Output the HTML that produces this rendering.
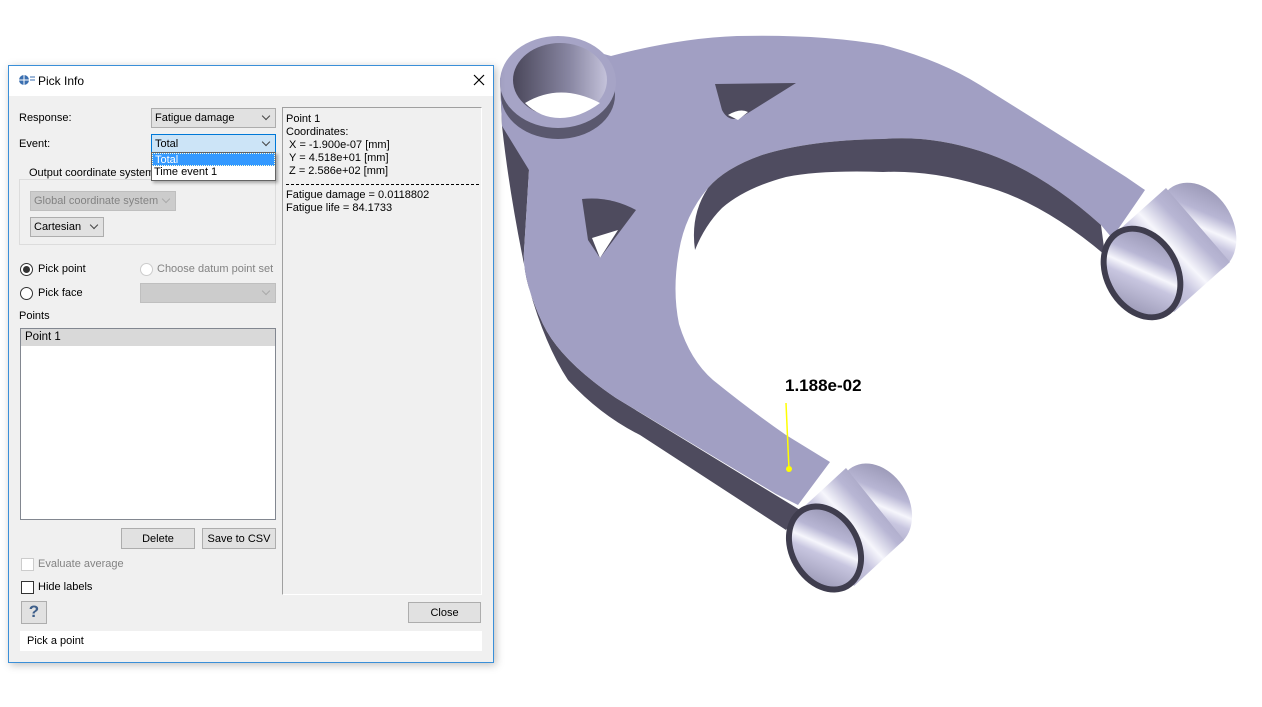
<!DOCTYPE html>
<html><head><meta charset="utf-8">
<style>
*{margin:0;padding:0;box-sizing:border-box}
body{width:1262px;height:707px;background:#fff;position:relative;overflow:hidden;font-family:"Liberation Sans",sans-serif;font-size:11px;color:#000}
.a{position:absolute}
.dlg{left:8px;top:65px;width:486px;height:598px;background:#f0f0f0;border:1px solid #3a8fd8;box-shadow:2px 2px 8px rgba(0,0,0,.25)}
.title{left:0;top:0;width:484px;height:30px;background:#fff}
.combo{height:20px;border:1px solid #adadad;background:#e1e1e1;padding:3px 0 0 3px;font-size:11px}
.chev{position:absolute;right:6px;top:4px;width:6px;height:6px;border-right:1px solid #444;border-bottom:1px solid #444;transform:rotate(45deg);}
.btn{height:21px;border:1px solid #adadad;background:#e1e1e1;text-align:center;padding-top:4px}
.radio{width:13px;height:13px;border:1px solid #333;border-radius:50%;background:#fff}
.chk{width:13px;height:13px;border:1px solid #333;background:#fff}
</style></head><body>

<svg class="a" style="left:0;top:0" width="1262" height="707">
<defs>
<linearGradient id="cyl" x1="0" y1="1" x2="1" y2="0">
<stop offset="0" stop-color="#8c8aa8"/><stop offset=".42" stop-color="#c8c6e0"/><stop offset=".52" stop-color="#f6f6fc"/><stop offset=".65" stop-color="#b8b6d4"/><stop offset="1" stop-color="#8a88a6"/></linearGradient>
<linearGradient id="hole" x1="0" y1="0" x2="1" y2="0"><stop offset="0" stop-color="#4a475a"/><stop offset=".6" stop-color="#8886a2"/><stop offset="1" stop-color="#c4c2da"/></linearGradient>
</defs>
<path d="M500,78 L502,126 Q510,200 529,288 Q545,345 568,380 Q600,415 640,435 L786,530 L800,510 L616,398 Q560,360 543,324 Q522,280 524,251 L529,170 Z" fill="#4e4b5e"/>
<path d="M500,78 Q560,40 611,56 Q680,38 737,36 Q820,34 883,45 Q940,60 980,85 Q1060,135 1126,177 L1145,190 L1112,238 L1101,225 Q1040,170 980,151 Q930,135 883,139 Q810,140 762,155 Q725,168 708,188 Q685,215 679,251 Q672,290 679,324 Q690,360 713,380 Q750,410 786,435 L830,462 L798,505 L776,494 L616,398 Q560,360 543,324 Q522,280 524,251 L529,170 L502,126 Z" fill="#a19fc3"/>
<path d="M708,188 Q725,168 762,155 Q810,140 883,139 Q930,135 980,151 Q1040,170 1101,225 L1105,255 Q1040,200 980,185 Q930,170 883,172 Q820,170 786,177 Q745,188 722,208 Q705,225 695,250 Q690,215 708,188 Z" fill="#4f4c60"/>
<ellipse cx="558" cy="95" rx="57" ry="44" fill="#5a586e"/>
<ellipse cx="558" cy="82" rx="58" ry="46" fill="#a6a4c6"/>
<ellipse cx="560" cy="80" rx="47" ry="37" fill="url(#hole)"/>
<path d="M525,103 Q560,82 600,103 Q580,118 560,118 Q540,118 525,103Z" fill="#fff"/>
<path d="M715,84 L796,83 L740,118 Q728,122 722,110 Z" fill="#4e4b5e"/>
<path d="M728,115 Q740,108 748,112 L738,120 Z" fill="#fff"/>
<path d="M582,199 Q610,196 636,210 L600,258 L588,240 Z" fill="#4e4b5e"/>
<path d="M592,238 L618,230 L600,258 Z" fill="#fff"/>
<!-- right cylinder -->
<ellipse cx="1197" cy="228" rx="36" ry="48" transform="rotate(-30 1197 228)" fill="url(#cyl)"/>
<polygon points="1174,312 1110,238 1166,188 1230,262" fill="url(#cyl)"/>
<ellipse cx="1142" cy="273" rx="38" ry="50" transform="rotate(-30 1142 273)" fill="#3f3d4e"/>
<ellipse cx="1142" cy="273" rx="32" ry="44" transform="rotate(-30 1142 273)" fill="url(#cyl)"/>
<!-- bottom cylinder -->
<ellipse cx="875" cy="506" rx="34" ry="45" transform="rotate(-30 875 506)" fill="url(#cyl)"/>
<polygon points="854,586 796,514 846,468 904,540" fill="url(#cyl)"/>
<ellipse cx="825" cy="548" rx="36" ry="47" transform="rotate(-30 825 548)" fill="#3f3d4e"/>
<ellipse cx="825" cy="548" rx="30" ry="41" transform="rotate(-30 825 548)" fill="url(#cyl)"/>
<line x1="786" y1="403" x2="789" y2="470" stroke="#ffff00" stroke-width="1.5"/>
<circle cx="789" cy="469" r="3" fill="#ffff00"/>
<text x="785" y="391" font-family="Liberation Sans" font-weight="bold" font-size="17" fill="#000">1.188e-02</text>
</svg>

<div class="a dlg">
 <div class="a title">
  <svg class="a" style="left:9px;top:8px" width="18" height="12"><circle cx="6" cy="6" r="5" fill="#3b6fb0"/><line x1="1" y1="6" x2="11" y2="6" stroke="#fff"/><line x1="6" y1="1" x2="6" y2="11" stroke="#fff"/><line x1="12" y1="3" x2="17" y2="3" stroke="#3b6fb0"/><line x1="12" y1="6" x2="17" y2="6" stroke="#3b6fb0"/></svg>
  <div class="a" style="left:29px;top:8px;font-size:12px">Pick Info</div>
  <svg class="a" style="left:464px;top:8px" width="12" height="12"><path d="M1,1 L11,11 M11,1 L1,11" stroke="#000" stroke-width="1.2"/></svg>
 </div>
 <div class="a" style="left:10px;top:46px">Response:</div>
 <div class="a combo" style="left:142px;top:42px;width:125px">Fatigue damage<div class="chev"></div></div>
 <div class="a" style="left:10px;top:72px">Event:</div>
 <div class="a combo" style="left:142px;top:68px;width:125px;background:#cce4f7;border-color:#0078d7">Total<div class="chev"></div></div>
 <div class="a" style="left:10px;top:113px;width:257px;height:66px;border:1px solid #dcdcdc"></div>
 <div class="a" style="left:18px;top:101px;background:#f0f0f0;padding:0 2px">Output coordinate system</div>
 <div class="a combo" style="left:21px;top:125px;width:146px;color:#838383;background:#ccc;border-color:#bfbfbf">Global coordinate system<div class="chev" style="border-color:#aaa"></div></div>
 <div class="a combo" style="left:21px;top:151px;width:74px">Cartesian<div class="chev"></div></div>
 <div class="a" style="left:142px;top:86px;width:125px;height:29px;background:#fff;border:1px solid #646464;box-shadow:2px 2px 3px rgba(0,0,0,.3)">
  <div style="background:#3399ff;color:#fff;height:13px;padding-left:2px;font-size:11px;line-height:12px;border:1px dotted #ffd">Total</div>
  <div style="padding-left:2px;font-size:11px;line-height:13px">Time event 1</div>
 </div>
 <div class="a radio" style="left:11px;top:197px"><div style="margin:2px;width:7px;height:7px;border-radius:50%;background:#333"></div></div>
 <div class="a" style="left:29px;top:197px">Pick point</div>
 <div class="a radio" style="left:131px;top:197px;border-color:#ccc"></div>
 <div class="a" style="left:148px;top:197px;color:#838383">Choose datum point set</div>
 <div class="a radio" style="left:11px;top:221px"></div>
 <div class="a" style="left:29px;top:221px">Pick face</div>
 <div class="a combo" style="left:131px;top:217px;width:136px;background:#ccc;border-color:#bfbfbf"><div class="chev" style="border-color:#aaa"></div></div>
 <div class="a" style="left:10px;top:244px">Points</div>
 <div class="a" style="left:11px;top:262px;width:256px;height:192px;background:#fff;border:1px solid #828790">
  <div style="background:#d9d9d9;height:17px;padding:2px 0 0 4px;font-size:11.5px">Point 1</div>
 </div>
 <div class="a btn" style="left:112px;top:462px;width:74px">Delete</div>
 <div class="a btn" style="left:193px;top:462px;width:74px">Save to CSV</div>
 <div class="a chk" style="left:12px;top:492px;border-color:#ccc"></div>
 <div class="a" style="left:29px;top:492px;color:#838383">Evaluate average</div>
 <div class="a chk" style="left:12px;top:515px"></div>
 <div class="a" style="left:29px;top:515px">Hide labels</div>
 <div class="a btn" style="left:12px;top:535px;width:26px;height:23px;font-weight:bold;font-size:17px;color:#3e5f8a;padding-top:0">?</div>
 <div class="a" style="left:273px;top:41px;width:200px;height:488px;border-left:1px solid #a0a0a0;border-top:1px solid #a0a0a0;border-right:1px solid #fff;border-bottom:1px solid #fff;padding:5px 3px;line-height:13px;font-size:11px">
  Point 1<br>Coordinates:<br>&nbsp;X = -1.900e-07 [mm]<br>&nbsp;Y = 4.518e+01 [mm]<br>&nbsp;Z = 2.586e+02 [mm]<br>
  <div style="border-top:1px dashed #000;margin:6px 0 4px;width:193px"></div>
  Fatigue damage = 0.0118802<br>Fatigue life = 84.1733
 </div>
 <div class="a btn" style="left:399px;top:536px;width:73px">Close</div>
 <div class="a" style="left:11px;top:565px;width:462px;height:20px;background:#fff;padding:4px 0 0 7px">Pick a point</div>
</div>
</body></html>
